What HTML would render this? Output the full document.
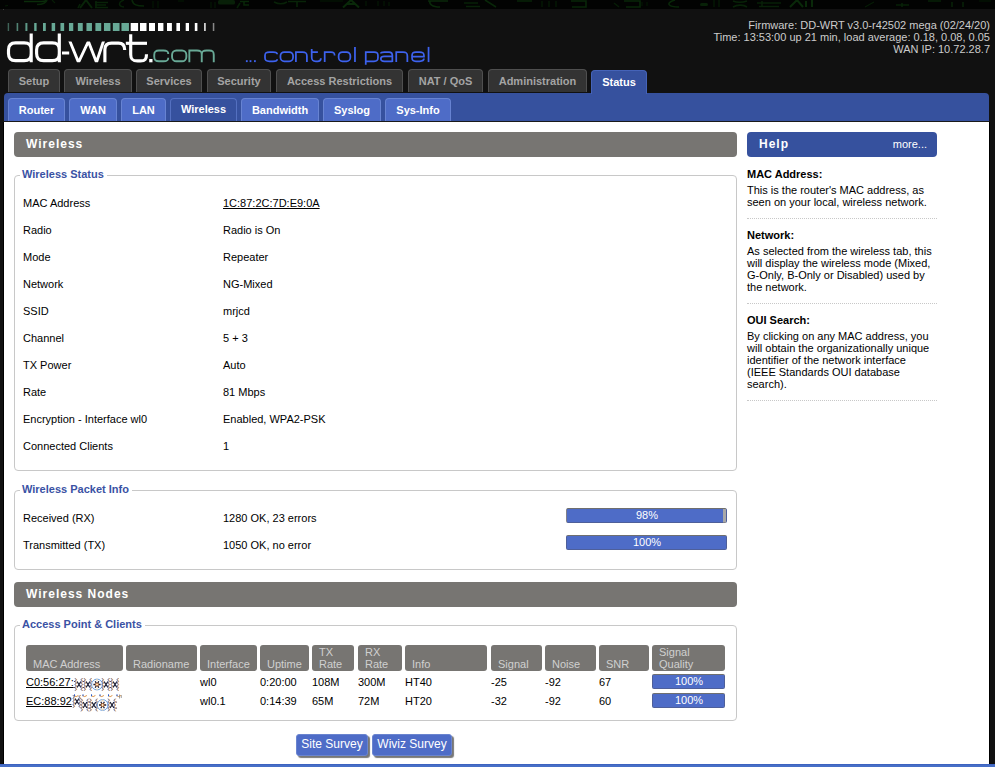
<!DOCTYPE html>
<html><head><meta charset="utf-8">
<style>
*{margin:0;padding:0;box-sizing:border-box}
html,body{width:995px;height:767px;overflow:hidden;background:#111;font-family:"Liberation Sans",sans-serif;font-size:11px;color:#000}
.abs{position:absolute}
#topstrip{left:0;top:0;width:995px;height:9px;background:#020302}
#fw{right:5px;top:19px;width:400px;text-align:right;color:#ccc;font-size:11px;line-height:12px}
.tab{position:absolute;top:69px;height:23px;background:#333;border:1px solid #4f4f4f;border-bottom:none;border-radius:4px 4px 0 0;color:#a4a4a4;font-weight:bold;font-size:11px;line-height:22px;text-align:center}
.tab.cur{background:#36519e;border-color:#4563b8;color:#fff;top:70px;height:24px;line-height:22px}
#band{left:4px;top:93px;width:985px;height:28px;background:#36519e;border-radius:4px 4px 0 0}
#bandline{left:4px;top:121px;width:985px;height:1px;background:#1a1a1a}
.stab{position:absolute;top:98px;height:23px;background:#4e6cc7;border:1px solid #6783d2;border-bottom:none;border-radius:4px 4px 0 0;color:#fff;font-weight:bold;font-size:11px;line-height:22px;text-align:center}
.stab.cur{background:#36519e;border-color:#5470c0;line-height:20px}
#content{left:3px;top:122px;width:987px;height:642px;background:#fff;border-left:1px solid #000;border-right:1px solid #000}
#foot{left:0;top:764px;width:995px;height:3px;background:#476fc7;border-top:1px solid #3d63c0}
.hdr{position:absolute;left:14px;width:723px;height:25px;background:#777572;border-radius:4px;color:#fff;font-weight:bold;font-size:12px;letter-spacing:1px;line-height:25px;padding-left:12px}
.fs{position:absolute;left:14px;width:723px;border:1px solid #c8c8c8;border-radius:4px}
.lg{position:absolute;left:20px;background:#fff;color:#3a52a4;font-weight:bold;font-size:11px;padding:1px 3px 0 2px;line-height:13px}
.row{position:absolute;left:23px;line-height:13px;white-space:nowrap}
.val{position:absolute;left:223px;line-height:13px;white-space:nowrap}
#help{left:747px;top:132px;width:190px;height:25px;background:#36519e;border-radius:4px;color:#fff}
#help b{position:absolute;left:12px;top:0;line-height:25px;font-size:12px;letter-spacing:1px}
#help span{position:absolute;right:10px;top:0;line-height:25px;font-size:11px}
.ht{position:absolute;left:747px;width:190px;line-height:12px;font-size:11px;color:#000}
.hsep{position:absolute;left:747px;width:190px;height:1px;border-top:1px dotted #c8c8c8}
.bar{position:absolute;left:566px;width:161px;height:15px;background:#4e6cc7;border:1px solid rgba(80,80,100,.45);border-top-color:#6f6f6f;border-radius:2px;color:#fff;text-align:center;line-height:13px;font-size:11px;padding-left:1px}
.th{position:absolute;top:645px;height:26px;background:#777572;border-radius:3px;color:#d0d0d0;font-size:11px;line-height:11px;padding:0 0 0 6px}
.th span{position:absolute;bottom:1px;left:7px;white-space:nowrap;line-height:11.5px}
.td{position:absolute;line-height:14px;white-space:nowrap}
.q{position:absolute;left:652px;width:73px;height:15px;background:#4e6cc7;border:1px solid rgba(80,80,100,.45);border-top-color:#6f6f6f;border-radius:2px;color:#fff;text-align:center;line-height:13px;font-size:11px;padding-left:1px}
.btn{position:absolute;top:734px;height:22px;background:#4e6cc7;border:1px solid #6a84cf;border-radius:3px;color:#fff;font-size:12px;line-height:19px;text-align:center;box-shadow:2px 2px 1px #777}
u{text-decoration:underline}
</style></head><body>
<div id="topstrip" class="abs"></div><!--strip--><svg class="abs" style="left:0;top:0;opacity:.75" width="995" height="9"><path d="M24,1.5H37C42,1.5 46,2 46,0" stroke="#0d3a0d" stroke-width="1.6" fill="none"/><path d="M37,4.5C42,4.5 46,3.5 47,0" stroke="#0b330b" stroke-width="1.6" fill="none"/><path d="M5,6L8,5.5" stroke="#082508" stroke-width="1.2" fill="none"/><path d="M52,0L55,3" stroke="#082508" stroke-width="1.2" fill="none"/><path d="M78,8L80,4" stroke="#0a2e0a" stroke-width="1.6" fill="none"/><path d="M80,8L86,0L92,8" stroke="#0b300b" stroke-width="2" fill="none"/><path d="M95,2.5H108M95,5H106M95,7.5H108M96,1V8" stroke="#0a2d0a" stroke-width="1.6" fill="none"/><path d="M124,0C118,2 118,6 124,7" stroke="#092a09" stroke-width="1.6" fill="none"/><path d="M132,0C133,5 137,6 144,6" stroke="#0b330b" stroke-width="1.6" fill="none"/><path d="M153,1V8M158,1V8" stroke="#061d06" stroke-width="1.2" fill="none"/><path d="M178,1H184" stroke="#061d06" stroke-width="1.2" fill="none"/><path d="M211,2V8M215,2V8" stroke="#071f07" stroke-width="1.2" fill="none"/><rect x="218" y="0" width="17" height="4.5" rx="1.5" fill="#0a2a0a"/><path d="M237,8L240,3" stroke="#092a09" stroke-width="1.6" fill="none"/><path d="M240,1.5H249M244,1.5V5H249" stroke="#0b330b" stroke-width="1.6" fill="none"/><path d="M274,2C278,4 282,5 287,2" stroke="#0a2d0a" stroke-width="1.6" fill="none"/><path d="M288,1.5H306M297,1.5V7" stroke="#0b300b" stroke-width="1.6" fill="none"/><path d="M320,1H343" stroke="#061d06" stroke-width="1.2" fill="none"/><path d="M343,7.5L351,0L359,7.5M347,4H355" stroke="#0c360c" stroke-width="2" fill="none"/><path d="M366,1V6" stroke="#071f07" stroke-width="1.2" fill="none"/><path d="M378,1V6M384,1V6M389,2V6" stroke="#071f07" stroke-width="1.2" fill="none"/><path d="M428,1H448M430,1C429,4 432,7 440,7" stroke="#0c360c" stroke-width="1.6" fill="none"/><path d="M464,3H478M466,6.5H480" stroke="#0a2d0a" stroke-width="1.6" fill="none"/><path d="M485,0L496,7" stroke="#0b330b" stroke-width="1.6" fill="none"/><path d="M517,1H532" stroke="#0a2d0a" stroke-width="1.6" fill="none"/><path d="M542,1V7M549,1V7M556,1V7" stroke="#082508" stroke-width="1.2" fill="none"/><path d="M571,1H586V7H572" stroke="#0b330b" stroke-width="1.6" fill="none"/><path d="M614,3L619,7" stroke="#082508" stroke-width="1.6" fill="none"/><path d="M624,1H640V7H626" stroke="#0b330b" stroke-width="1.6" fill="none"/><path d="M642,2V6M647,2V6" stroke="#061d06" stroke-width="1.2" fill="none"/><path d="M675,0C665,3 668,7 679,7" stroke="#0b330b" stroke-width="1.6" fill="none"/><rect x="700" y="3" width="8" height="3" rx="1.5" fill="#0a2d0a"/><path d="M714,0V7M719,0V7" stroke="#082508" stroke-width="1.2" fill="none"/><path d="M733,1C738,3 744,2 747,1M733,7C738,4 744,5 747,7" stroke="#0a2d0a" stroke-width="1.6" fill="none"/><path d="M757,3H781M759,6.5H779M762,1V7" stroke="#0a2a0a" stroke-width="1.6" fill="none"/><path d="M790,7L797,0M797,0L803,7M806,1V7M812,0V7" stroke="#0c360c" stroke-width="2" fill="none"/><path d="M865,7L874,2" stroke="#082508" stroke-width="1.2" fill="none"/><path d="M896,5H909M902,3V7" stroke="#0a2d0a" stroke-width="1.6" fill="none"/><path d="M928,1H941" stroke="#092a09" stroke-width="1.6" fill="none"/><path d="M952,2V7M963,2V7" stroke="#0a2d0a" stroke-width="1.6" fill="none"/><path d="M979,1H991" stroke="#061d06" stroke-width="1.2" fill="none"/></svg><!--/strip--><div id="dot" class="abs" style="left:3px;top:9px;width:1px;height:1px;background:#3a3a3a"></div>

<!-- logo bars -->
<svg class="abs" style="left:0;top:0" width="440" height="68" viewBox="0 0 440 68">
<defs><clipPath id="wc"><rect x="60" y="41.5" width="50" height="20.8"/></clipPath></defs>
<rect x="7.70" y="23" width="1.40" height="8" fill="#68a996" opacity="0.55"/><rect x="16.60" y="23" width="1.60" height="8" fill="#68a996" opacity="0.75"/><rect x="25.40" y="23" width="2.00" height="8" fill="#68a996" opacity="0.9"/><rect x="34.20" y="23" width="2.40" height="8" fill="#68a996" opacity="1"/><rect x="43.00" y="23" width="2.80" height="8" fill="#68a996" opacity="1"/><rect x="51.65" y="23" width="3.50" height="8" fill="#68a996" opacity="1"/><rect x="60.45" y="23" width="3.70" height="8" fill="#68a996" opacity="1"/><rect x="68.95" y="23" width="4.30" height="8" fill="#68a996" opacity="1"/><rect x="77.85" y="23" width="4.90" height="8" fill="#68a996" opacity="1"/><rect x="86.45" y="23" width="5.50" height="8" fill="#68a996" opacity="1"/><rect x="95.40" y="23" width="5.80" height="8" fill="#68a996" opacity="1"/><rect x="103.95" y="23" width="6.50" height="8" fill="#68a996" opacity="1"/><rect x="112.85" y="23" width="6.70" height="8" fill="#68a996" opacity="1"/><rect x="121.45" y="23" width="7.50" height="8" fill="#68a996" opacity="1"/><rect x="130.70" y="23" width="7.40" height="8" fill="#fff" opacity="1"/><rect x="140.00" y="23" width="6.50" height="8" fill="#fff" opacity="1"/><rect x="149.00" y="23" width="6.00" height="8" fill="#fff" opacity="1"/><rect x="158.00" y="23" width="5.40" height="8" fill="#fff" opacity="1"/><rect x="167.00" y="23" width="4.90" height="8" fill="#fff" opacity="1"/><rect x="176.40" y="23" width="3.60" height="8" fill="#fff" opacity="1"/><rect x="185.70" y="23" width="3.30" height="8" fill="#fff" opacity="1"/><rect x="194.80" y="23" width="2.60" height="8" fill="#fff" opacity="1"/><rect x="204.00" y="23" width="1.80" height="8" fill="#fff" opacity="0.8"/><rect x="212.80" y="23" width="1.50" height="8" fill="#fff" opacity="0.5"/><g fill="none" stroke="#fff" stroke-width="3.15">
<path d="M31.2,33.4V62.3 M31.2,50C31.2,45 29.2,42.9 24.2,42.9H15.5C10.6,42.9 8.5,45 8.5,50V53.5C8.5,58.5 10.6,60.6 15.5,60.6H24.2C29.2,60.6 31.2,58.5 31.2,53.5"/>
<path transform="translate(28.1 0)" d="M31.2,33.4V62.3 M31.2,50C31.2,45 29.2,42.9 24.2,42.9H15.5C10.6,42.9 8.5,45 8.5,50V53.5C8.5,58.5 10.6,60.6 15.5,60.6H24.2C29.2,60.6 31.2,58.5 31.2,53.5"/>
<path d="M62,53H69.2" stroke-width="3"/>
<g clip-path="url(#wc)"><path d="M68.77,38.5 L78.5,62.3 L88.4,41.5 L96.5,62.3 L104.2,39" stroke-width="2.9" stroke-linejoin="miter" stroke-miterlimit="10"/></g>
<path d="M104.9,62.3V49.5C104.9,44.8 107,43.1 111.5,43.1H118.5C122.6,43.1 124.7,45 124.7,50"/>
<path d="M130.7,34.2V54.5C130.7,59.5 132.5,60.9 137.5,60.9H140.5C145,60.9 146.5,59.5 146.5,54.2"/>
<path d="M125.8,43.3H147"/>
</g>
<rect x="149.2" y="59" width="3.3" height="3.3" fill="#fff"/><g fill="none" stroke="#68a996" stroke-width="1.9">
<path d="M168.25,54.0C168.25,51.2 167.2,50.45 163.5,50.45H159C155.2,50.45 154.25,51.8 154.25,55V56.7C154.25,59.9 155.2,61.25 159,61.25H163.5C167.2,61.25 168.25,60.5 168.25,57.8"/>
<rect x="172.05" y="50.45" width="14.3" height="10.8" rx="4.3"/>
<path d="M189.35,62.2V50.45H197C200.6,50.45 201.75,51.5 201.75,54.8V62.2 M201.75,54.8C201.75,51.5 202.9,50.45 206.5,50.45H209.2C212.6,50.45 213.75,51.5 213.75,54.8V62.2"/>
</g><g fill="#3d62ee"><rect x="245.9" y="60.2" width="1.8" height="1.9"/><rect x="249.6" y="60.2" width="1.8" height="1.9"/><rect x="254" y="60.2" width="1.8" height="1.9"/></g>
<g fill="none" stroke="#3d62ee" stroke-width="1.75">
<path d="M277.2,54.2C277.2,52.6 276.2,52.05 273,52.05H269.5C265.8,52.05 265,53 265,55.5V57.8C265,60.3 265.8,61.25 269.5,61.25H273C276.2,61.25 277.2,60.7 277.2,59.2"/>
<rect x="280.45" y="52.05" width="12.6" height="9.2" rx="3.8"/>
<path d="M295.9,62.1V52.05H302.5C306,52.05 306.9,53 306.9,56V62.1"/>
<path d="M311.7,48.9V57C311.7,60.3 312.6,61.25 315.8,61.25H317.5C320.2,61.25 320.9,60.4 320.9,58.2 M310.8,52.05H317.9"/>
<path d="M324.7,62.1V52.05H331C334,52.05 334.6,53 334.6,55.4"/>
<rect x="338.65" y="52.05" width="11.7" height="9.2" rx="3.8"/>
<path d="M354.95,46.9V62.1"/>
<path d="M365.75,64.7V52.05H374C377.2,52.05 377.95,53 377.95,55.5V57.8C377.95,60.3 377.2,61.25 374,61.25H365.75"/>
<path d="M380.85,53.5C380.85,52.4 381.8,52.05 384.5,52.05H389C391.6,52.05 392.35,53 392.35,55.5V62.1 M392.35,56.4H384.5C381.5,56.4 380.85,57.2 380.85,58.7C380.85,60.6 381.5,61.25 384.5,61.25H392.35"/>
<path d="M396.25,62.1V52.05H403C406.6,52.05 407.35,53 407.35,56V62.1"/>
<path d="M423.95,58.6C423.95,60.6 423,61.25 419.5,61.25H416C412.8,61.25 412.05,60.3 412.05,57.8V55.5C412.05,53 412.8,52.05 416,52.05H419.5C423,52.05 423.95,53 423.95,55.5V56.6H412.05"/>
<path d="M428.55,46.9V62.1"/>
</g></svg>

<div id="fw" class="abs">Firmware: DD-WRT v3.0-r42502 mega (02/24/20)<br>Time: 13:53:00 up 21 min, load average: 0.18, 0.08, 0.05<br>WAN IP: 10.72.28.7</div>

<div class="tab" style="left:8px;width:52px">Setup</div>
<div class="tab" style="left:64px;width:68px">Wireless</div>
<div class="tab" style="left:136px;width:66px">Services</div>
<div class="tab" style="left:207px;width:64px">Security</div>
<div class="tab" style="left:276px;width:127px">Access Restrictions</div>
<div class="tab" style="left:408px;width:75px">NAT / QoS</div>
<div class="tab" style="left:488px;width:99px">Administration</div>

<div id="band" class="abs"></div>
<div class="tab cur" style="left:591px;width:56px">Status</div>
<div class="stab" style="left:8px;width:57px">Router</div>
<div class="stab" style="left:69px;width:48px">WAN</div>
<div class="stab" style="left:121px;width:45px">LAN</div>
<div class="stab cur" style="left:170px;width:67px">Wireless</div>
<div class="stab" style="left:241px;width:78px">Bandwidth</div>
<div class="stab" style="left:323px;width:58px">Syslog</div>
<div class="stab" style="left:385px;width:66px">Sys-Info</div>
<div id="bandline" class="abs"></div>

<div id="content" class="abs"></div>
<div id="foot" class="abs"></div>

<div class="hdr" style="top:132px">Wireless</div>
<div class="fs" style="top:175px;height:296px"></div>
<div class="lg" style="top:167px">Wireless Status</div>
<div class="row" style="top:197px">MAC Address</div><div class="val" style="top:197px"><u>1C:87:2C:7D:E9:0A</u></div>
<div class="row" style="top:224px">Radio</div><div class="val" style="top:224px">Radio is On</div>
<div class="row" style="top:251px">Mode</div><div class="val" style="top:251px">Repeater</div>
<div class="row" style="top:278px">Network</div><div class="val" style="top:278px">NG-Mixed</div>
<div class="row" style="top:305px">SSID</div><div class="val" style="top:305px">mrjcd</div>
<div class="row" style="top:332px">Channel</div><div class="val" style="top:332px">5 + 3</div>
<div class="row" style="top:359px">TX Power</div><div class="val" style="top:359px">Auto</div>
<div class="row" style="top:386px">Rate</div><div class="val" style="top:386px">81 Mbps</div>
<div class="row" style="top:413px">Encryption - Interface wl0</div><div class="val" style="top:413px">Enabled, WPA2-PSK</div>
<div class="row" style="top:440px">Connected Clients</div><div class="val" style="top:440px">1</div>

<div class="fs" style="top:490px;height:80px"></div>
<div class="lg" style="top:482px">Wireless Packet Info</div>
<div class="row" style="top:512px">Received (RX)</div><div class="val" style="top:512px">1280 OK, 23 errors</div>
<div class="row" style="top:539px">Transmitted (TX)</div><div class="val" style="top:539px">1050 OK, no error</div>
<div class="bar" style="top:508px;background:linear-gradient(90deg,#4e6cc7 0,#4e6cc7 156px,#a8a8a8 156px)">98%</div>
<div class="bar" style="top:535px">100%</div>

<div class="hdr" style="top:582px">Wireless Nodes</div>
<div class="fs" style="top:625px;height:96px"></div>
<div class="lg" style="top:617px">Access Point &amp; Clients</div>

<div class="th" style="left:26px;width:97px"><span>MAC Address</span></div>
<div class="th" style="left:126px;width:71px"><span>Radioname</span></div>
<div class="th" style="left:200px;width:57px"><span>Interface</span></div>
<div class="th" style="left:260px;width:49px"><span>Uptime</span></div>
<div class="th" style="left:312px;width:42px"><span>TX<br>Rate</span></div>
<div class="th" style="left:358px;width:44px"><span>RX<br>Rate</span></div>
<div class="th" style="left:405px;width:82px"><span>Info</span></div>
<div class="th" style="left:491px;width:51px"><span>Signal</span></div>
<div class="th" style="left:545px;width:51px"><span>Noise</span></div>
<div class="th" style="left:599px;width:50px"><span>SNR</span></div>
<div class="th" style="left:652px;width:73px"><span>Signal<br>Quality</span></div>

<div class="td" style="left:26px;top:675px"><u>C0:56:27:</u></div>
<div class="td" style="left:200px;top:675px">wl0</div>
<div class="td" style="left:260px;top:675px">0:20:00</div>
<div class="td" style="left:312px;top:675px">108M</div>
<div class="td" style="left:358px;top:675px">300M</div>
<div class="td" style="left:405px;top:675px">HT40</div>
<div class="td" style="left:491px;top:675px">-25</div>
<div class="td" style="left:545px;top:675px">-92</div>
<div class="td" style="left:599px;top:675px">67</div>
<div class="q" style="top:674px">100%</div>

<div class="td" style="left:26px;top:694px"><u>EC:88:92</u></div>
<div class="td" style="left:200px;top:694px">wl0.1</div>
<div class="td" style="left:260px;top:694px">0:14:39</div>
<div class="td" style="left:312px;top:694px">65M</div>
<div class="td" style="left:358px;top:694px">72M</div>
<div class="td" style="left:405px;top:694px">HT20</div>
<div class="td" style="left:491px;top:694px">-32</div>
<div class="td" style="left:545px;top:694px">-92</div>
<div class="td" style="left:599px;top:694px">60</div>
<div class="q" style="top:693px">100%</div>

<!--obf--><svg class="abs" style="left:0;top:0" width="130" height="715"><path d="M77.0,681.5L81.0,687.5M81.0,681.5L77.0,687.5" stroke="#1a1d33" stroke-width="1.3"/><path d="M75.4,678.2q2.4,1.6 0,3.15q2.4,1.6 0,3.15q2.4,1.6 0,3.15q2.4,1.6 0,3.15M82.6,678.2q-2.4,1.6 0,3.15q-2.4,1.6 0,3.15q-2.4,1.6 0,3.15q-2.4,1.6 0,3.15" stroke="#d8842c" stroke-width=".9" fill="none"/><path d="M75.4,678.2q2.4,1.6 0,3.15q2.4,1.6 0,3.15q2.4,1.6 0,3.15q2.4,1.6 0,3.15M82.6,678.2q-2.4,1.6 0,3.15q-2.4,1.6 0,3.15q-2.4,1.6 0,3.15q-2.4,1.6 0,3.15" stroke="#2a5cc8" stroke-width=".7" fill="none" transform="translate(-.6 0)" opacity=".8"/><path d="M86.0,681.5L90.0,687.5M90.0,681.5L86.0,687.5" stroke="#1a1d33" stroke-width="1.3"/><path d="M84.4,678.2q2.4,1.6 0,3.15q2.4,1.6 0,3.15q2.4,1.6 0,3.15q2.4,1.6 0,3.15M91.6,678.2q-2.4,1.6 0,3.15q-2.4,1.6 0,3.15q-2.4,1.6 0,3.15q-2.4,1.6 0,3.15" stroke="#d8842c" stroke-width=".9" fill="none"/><path d="M84.4,678.2q2.4,1.6 0,3.15q2.4,1.6 0,3.15q2.4,1.6 0,3.15q2.4,1.6 0,3.15M91.6,678.2q-2.4,1.6 0,3.15q-2.4,1.6 0,3.15q-2.4,1.6 0,3.15q-2.4,1.6 0,3.15" stroke="#2a5cc8" stroke-width=".7" fill="none" transform="translate(-.6 0)" opacity=".8"/><circle cx="97" cy="684.5" r="5.4" fill="none" stroke="#5a94dc" stroke-width=".9"/><path d="M93.4,684.5H100.6M95.2,681.3L98.8,687.7M98.8,681.3L95.2,687.7" stroke="#1a1d33" stroke-width="1.3"/><circle cx="97" cy="684.5" r="1.5" fill="#fbe9c8" stroke="#b8652a" stroke-width=".9"/><circle cx="97" cy="679.9" r=".9" fill="#f3d9a8"/><circle cx="97" cy="689.1" r=".9" fill="#f3d9a8"/><path d="M104.0,681.5L108.0,687.5M108.0,681.5L104.0,687.5" stroke="#1a1d33" stroke-width="1.3"/><path d="M102.4,678.2q2.4,1.6 0,3.15q2.4,1.6 0,3.15q2.4,1.6 0,3.15q2.4,1.6 0,3.15M109.6,678.2q-2.4,1.6 0,3.15q-2.4,1.6 0,3.15q-2.4,1.6 0,3.15q-2.4,1.6 0,3.15" stroke="#d8842c" stroke-width=".9" fill="none"/><path d="M102.4,678.2q2.4,1.6 0,3.15q2.4,1.6 0,3.15q2.4,1.6 0,3.15q2.4,1.6 0,3.15M109.6,678.2q-2.4,1.6 0,3.15q-2.4,1.6 0,3.15q-2.4,1.6 0,3.15q-2.4,1.6 0,3.15" stroke="#2a5cc8" stroke-width=".7" fill="none" transform="translate(-.6 0)" opacity=".8"/><path d="M113.0,681.5L117.0,687.5M117.0,681.5L113.0,687.5" stroke="#1a1d33" stroke-width="1.3"/><path d="M111.4,678.2q2.4,1.6 0,3.15q2.4,1.6 0,3.15q2.4,1.6 0,3.15q2.4,1.6 0,3.15M118.6,678.2q-2.4,1.6 0,3.15q-2.4,1.6 0,3.15q-2.4,1.6 0,3.15q-2.4,1.6 0,3.15" stroke="#d8842c" stroke-width=".9" fill="none"/><path d="M111.4,678.2q2.4,1.6 0,3.15q2.4,1.6 0,3.15q2.4,1.6 0,3.15q2.4,1.6 0,3.15M118.6,678.2q-2.4,1.6 0,3.15q-2.4,1.6 0,3.15q-2.4,1.6 0,3.15q-2.4,1.6 0,3.15" stroke="#2a5cc8" stroke-width=".7" fill="none" transform="translate(-.6 0)" opacity=".8"/><circle cx="74.5" cy="681.5" r=".6" fill="#3a2850"/><circle cx="74.5" cy="687.5" r=".6" fill="#3a2850"/><circle cx="83.5" cy="681.5" r=".6" fill="#3a2850"/><circle cx="83.5" cy="687.5" r=".6" fill="#3a2850"/><circle cx="110.5" cy="681.5" r=".6" fill="#3a2850"/><circle cx="110.5" cy="687.5" r=".6" fill="#3a2850"/><path d="M75.0,698.5L79.0,704.5M79.0,698.5L75.0,704.5" stroke="#1a1d33" stroke-width="1.3"/><path d="M73.4,695.2q2.4,1.6 0,3.15q2.4,1.6 0,3.15q2.4,1.6 0,3.15q2.4,1.6 0,3.15M80.6,695.2q-2.4,1.6 0,3.15q-2.4,1.6 0,3.15q-2.4,1.6 0,3.15q-2.4,1.6 0,3.15" stroke="#d8842c" stroke-width=".9" fill="none"/><path d="M73.4,695.2q2.4,1.6 0,3.15q2.4,1.6 0,3.15q2.4,1.6 0,3.15q2.4,1.6 0,3.15M80.6,695.2q-2.4,1.6 0,3.15q-2.4,1.6 0,3.15q-2.4,1.6 0,3.15q-2.4,1.6 0,3.15" stroke="#2a5cc8" stroke-width=".7" fill="none" transform="translate(-.6 0)" opacity=".8"/><path d="M83.0,702.0L87.0,708.0M87.0,702.0L83.0,708.0" stroke="#1a1d33" stroke-width="1.3"/><path d="M81.4,698.7q2.4,1.6 0,3.15q2.4,1.6 0,3.15q2.4,1.6 0,3.15q2.4,1.6 0,3.15M88.6,698.7q-2.4,1.6 0,3.15q-2.4,1.6 0,3.15q-2.4,1.6 0,3.15q-2.4,1.6 0,3.15" stroke="#d8842c" stroke-width=".9" fill="none"/><path d="M81.4,698.7q2.4,1.6 0,3.15q2.4,1.6 0,3.15q2.4,1.6 0,3.15q2.4,1.6 0,3.15M88.6,698.7q-2.4,1.6 0,3.15q-2.4,1.6 0,3.15q-2.4,1.6 0,3.15q-2.4,1.6 0,3.15" stroke="#2a5cc8" stroke-width=".7" fill="none" transform="translate(-.6 0)" opacity=".8"/><path d="M91.8,702.0L95.8,708.0M95.8,702.0L91.8,708.0" stroke="#1a1d33" stroke-width="1.3"/><path d="M90.2,698.7q2.4,1.6 0,3.15q2.4,1.6 0,3.15q2.4,1.6 0,3.15q2.4,1.6 0,3.15M97.39999999999999,698.7q-2.4,1.6 0,3.15q-2.4,1.6 0,3.15q-2.4,1.6 0,3.15q-2.4,1.6 0,3.15" stroke="#d8842c" stroke-width=".9" fill="none"/><path d="M90.2,698.7q2.4,1.6 0,3.15q2.4,1.6 0,3.15q2.4,1.6 0,3.15q2.4,1.6 0,3.15M97.39999999999999,698.7q-2.4,1.6 0,3.15q-2.4,1.6 0,3.15q-2.4,1.6 0,3.15q-2.4,1.6 0,3.15" stroke="#2a5cc8" stroke-width=".7" fill="none" transform="translate(-.6 0)" opacity=".8"/><circle cx="102.6" cy="705" r="5.4" fill="none" stroke="#5a94dc" stroke-width=".9"/><path d="M99.0,705H106.19999999999999M100.8,701.8L104.39999999999999,708.2M104.39999999999999,701.8L100.8,708.2" stroke="#1a1d33" stroke-width="1.3"/><circle cx="102.6" cy="705" r="1.5" fill="#fbe9c8" stroke="#b8652a" stroke-width=".9"/><circle cx="102.6" cy="700.4" r=".9" fill="#f3d9a8"/><circle cx="102.6" cy="709.6" r=".9" fill="#f3d9a8"/><path d="M110.0,702.0L114.0,708.0M114.0,702.0L110.0,708.0" stroke="#1a1d33" stroke-width="1.3"/><path d="M108.4,698.7q2.4,1.6 0,3.15q2.4,1.6 0,3.15q2.4,1.6 0,3.15q2.4,1.6 0,3.15M115.6,698.7q-2.4,1.6 0,3.15q-2.4,1.6 0,3.15q-2.4,1.6 0,3.15q-2.4,1.6 0,3.15" stroke="#d8842c" stroke-width=".9" fill="none"/><path d="M108.4,698.7q2.4,1.6 0,3.15q2.4,1.6 0,3.15q2.4,1.6 0,3.15q2.4,1.6 0,3.15M115.6,698.7q-2.4,1.6 0,3.15q-2.4,1.6 0,3.15q-2.4,1.6 0,3.15q-2.4,1.6 0,3.15" stroke="#2a5cc8" stroke-width=".7" fill="none" transform="translate(-.6 0)" opacity=".8"/><circle cx="89.5" cy="702" r=".6" fill="#3a2850"/><circle cx="89.5" cy="708" r=".6" fill="#3a2850"/><circle cx="116.5" cy="702" r=".6" fill="#3a2850"/><circle cx="116.5" cy="708" r=".6" fill="#3a2850"/><path d="M74,695.5q2.2,2.2 4.4,0" stroke="#d8842c" stroke-width=".9" fill="none"/><path d="M74.5,694.3v2" stroke="#2a5cc8" stroke-width="1"/><path d="M82.5,695.5q2.2,2.2 4.4,0" stroke="#d8842c" stroke-width=".9" fill="none"/><path d="M83.0,694.3v2" stroke="#2a5cc8" stroke-width="1"/><path d="M91.0,695.5q2.2,2.2 4.4,0" stroke="#d8842c" stroke-width=".9" fill="none"/><path d="M91.5,694.3v2" stroke="#2a5cc8" stroke-width="1"/><path d="M99.5,695.5q2.2,2.2 4.4,0" stroke="#d8842c" stroke-width=".9" fill="none"/><path d="M100.0,694.3v2" stroke="#2a5cc8" stroke-width="1"/><path d="M108.0,695.5q2.2,2.2 4.4,0" stroke="#d8842c" stroke-width=".9" fill="none"/><path d="M108.5,694.3v2" stroke="#2a5cc8" stroke-width="1"/><path d="M116.5,695.5q2.2,2.2 4.4,0" stroke="#d8842c" stroke-width=".9" fill="none"/><path d="M117.0,694.3v2" stroke="#2a5cc8" stroke-width="1"/><path d="M119.5,694.5v4M121.3,695v3" stroke="#888" stroke-width=".8"/></svg><!--/obf-->
<div class="btn" style="left:296px;width:72px">Site Survey</div>
<div class="btn" style="left:372px;width:80px">Wiviz Survey</div>

<div class="ht" style="top:168px"><b>MAC Address:</b></div>
<div class="ht" style="top:184px">This is the router's MAC address, as<br>seen on your local, wireless network.</div>
<div class="hsep" style="top:218px"></div>
<div class="ht" style="top:229px"><b>Network:</b></div>
<div class="ht" style="top:245px">As selected from the wireless tab, this<br>will display the wireless mode (Mixed,<br>G-Only, B-Only or Disabled) used by<br>the network.</div>
<div class="hsep" style="top:303px"></div>
<div class="ht" style="top:314px"><b>OUI Search:</b></div>
<div class="ht" style="top:330px">By clicking on any MAC address, you<br>will obtain the organizationally unique<br>identifier of the network interface<br>(IEEE Standards OUI database<br>search).</div>
<div class="hsep" style="top:400px"></div>

<div id="help" class="abs"><b>Help</b><span>more...</span></div>
</body></html>
